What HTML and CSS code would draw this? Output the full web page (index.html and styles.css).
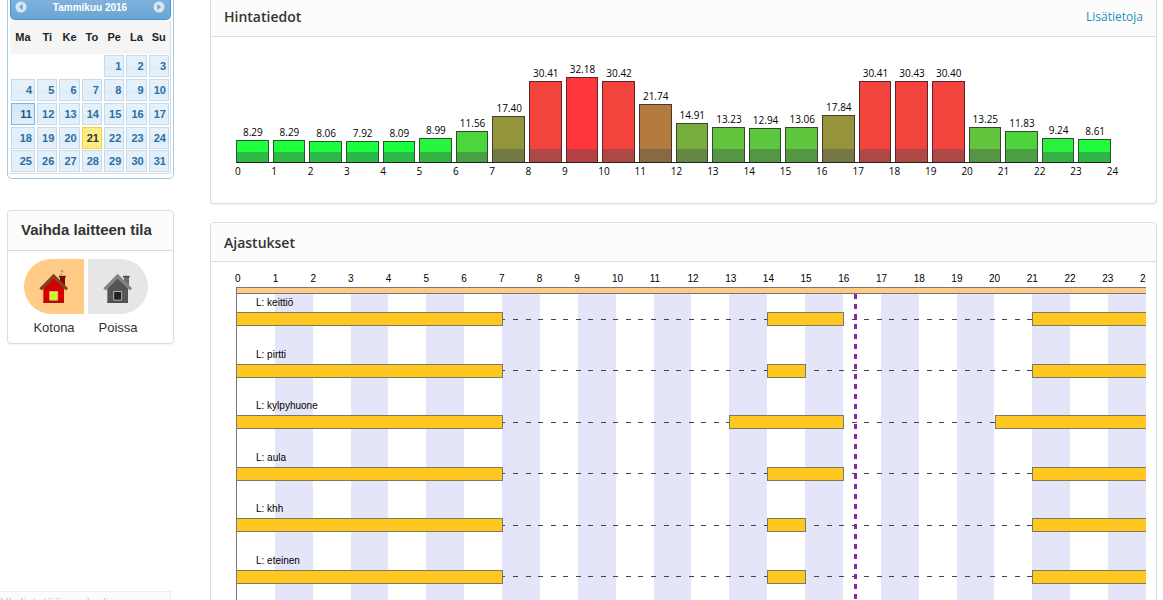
FILE: index.html
```html
<!DOCTYPE html>
<html lang="fi">
<head>
<meta charset="utf-8">
<title>Ohjauspaneeli</title>
<link rel="stylesheet" href="styles.css">
</head>
<body>
<div class="page">
  <aside class="sidebar">
    <section class="datepicker" aria-label="Kalenteri">
      <div class="dp-head">
        <button class="dp-nav" aria-label="Edellinen"><svg viewBox="0 0 12 12"><circle cx="6" cy="6" r="5.5"/><path d="M7.6 3v6L4 6z"/></svg></button>
        <span>Tammikuu 2016</span>
        <button class="dp-nav" aria-label="Seuraava"><svg viewBox="0 0 12 12"><circle cx="6" cy="6" r="5.5"/><path d="M4.4 3v6L8 6z"/></svg></button>
      </div>
      <table class="dp-table">
        <thead><tr><th>Ma</th><th>Ti</th><th>Ke</th><th>To</th><th>Pe</th><th>La</th><th>Su</th></tr></thead>
        <tbody>
          <tr><td></td><td></td><td></td><td></td><td><a href="#">1</a></td><td><a href="#">2</a></td><td><a href="#">3</a></td></tr>
          <tr><td><a href="#">4</a></td><td><a href="#">5</a></td><td><a href="#">6</a></td><td><a href="#">7</a></td><td><a href="#">8</a></td><td><a href="#">9</a></td><td><a href="#">10</a></td></tr>
          <tr><td><a class="selected" href="#">11</a></td><td><a href="#">12</a></td><td><a href="#">13</a></td><td><a href="#">14</a></td><td><a href="#">15</a></td><td><a href="#">16</a></td><td><a href="#">17</a></td></tr>
          <tr><td><a href="#">18</a></td><td><a href="#">19</a></td><td><a href="#">20</a></td><td><a class="today" href="#">21</a></td><td><a href="#">22</a></td><td><a href="#">23</a></td><td><a href="#">24</a></td></tr>
          <tr><td><a href="#">25</a></td><td><a href="#">26</a></td><td><a href="#">27</a></td><td><a href="#">28</a></td><td><a href="#">29</a></td><td><a href="#">30</a></td><td><a href="#">31</a></td></tr>
        </tbody>
      </table>
    </section>

    <section class="card mode-card">
      <h2 class="mode-title">Vaihda laitteen tila</h2>
      <div class="modes">
        <button class="mode home">
          <span class="tile"><svg viewBox="56 40 96 104">
            <path d="M123 58v-5h5v-5h-4v-4h8v6h-4v7z" fill="#a08c70"/>
            <path d="M122 64h15v26h-15z" fill="#8c0000"/><path d="M119 60h20v5h-20z" fill="#4a1408"/>
            <path d="M72 94l30-28 32 28v46H72z" fill="#d40000"/><path d="M72 137h62v4H72z" fill="#8a1008"/>
            <path d="M60 97l43-43 43 43-6 7-37-35-36 35z" fill="#7d4420"/>
            <path d="M91 107h24v26H91z" fill="#ccff22" stroke="#e8a878" stroke-width="3"/>
          </svg></span>
          <span>Kotona</span>
        </button>
        <button class="mode away">
          <span class="tile"><svg viewBox="56 40 96 104">
            <path d="M122 64h15v26h-15z" fill="#6c6c6c"/><path d="M119 60h20v5h-20z" fill="#484848"/>
            <path d="M72 94l30-28 32 28v46H72z" fill="#555"/><path d="M72 137h62v4H72z" fill="#444"/>
            <path d="M60 97l43-43 43 43-6 7-37-35-36 35z" fill="#848484"/>
            <path d="M91 107h24v26H91z" fill="#222" stroke="#b0b0b0" stroke-width="3"/>
          </svg></span>
          <span>Poissa</span>
        </button>
      </div>
    </section>
  </aside>

  <main class="content">
    <section class="card price-card">
      <header class="card-head"><h2>Hintatiedot</h2><a href="#">Lisätietoja</a></header>
      <div class="prices">
        <div class="bars">
          <div class="bar low" style="--v:8.29;--c:#20ff3e"><span>8.29</span><i></i></div>
          <div class="bar low" style="--v:8.29;--c:#20ff3e"><span>8.29</span><i></i></div>
          <div class="bar low" style="--v:8.06;--c:#1cff3e"><span>8.06</span><i></i></div>
          <div class="bar low" style="--v:7.92;--c:#1aff3e"><span>7.92</span><i></i></div>
          <div class="bar low" style="--v:8.09;--c:#1cff3e"><span>8.09</span><i></i></div>
          <div class="bar low" style="--v:8.99;--c:#28f53e"><span>8.99</span><i></i></div>
          <div class="bar low" style="--v:11.56;--c:#4ad63c"><span>11.56</span><i></i></div>
          <div class="bar" style="--v:17.40;--c:#93953c"><span>17.40</span><i></i></div>
          <div class="bar" style="--v:30.41;--c:#f2433c"><span>30.41</span><i></i></div>
          <div class="bar" style="--v:32.18;--c:#ff373c"><span>32.18</span><i></i></div>
          <div class="bar" style="--v:30.42;--c:#f2433c"><span>30.42</span><i></i></div>
          <div class="bar" style="--v:21.74;--c:#b27a3c"><span>21.74</span><i></i></div>
          <div class="bar" style="--v:14.91;--c:#76ad3c"><span>14.91</span><i></i></div>
          <div class="bar" style="--v:13.23;--c:#60c43c"><span>13.23</span><i></i></div>
          <div class="bar" style="--v:12.94;--c:#5cc63c"><span>12.94</span><i></i></div>
          <div class="bar" style="--v:13.06;--c:#5ec53c"><span>13.06</span><i></i></div>
          <div class="bar" style="--v:17.84;--c:#97923c"><span>17.84</span><i></i></div>
          <div class="bar" style="--v:30.41;--c:#f2433c"><span>30.41</span><i></i></div>
          <div class="bar" style="--v:30.43;--c:#f2433c"><span>30.43</span><i></i></div>
          <div class="bar" style="--v:30.40;--c:#f2433c"><span>30.40</span><i></i></div>
          <div class="bar" style="--v:13.25;--c:#60c43c"><span>13.25</span><i></i></div>
          <div class="bar" style="--v:11.83;--c:#4dd43c"><span>11.83</span><i></i></div>
          <div class="bar low" style="--v:9.24;--c:#2af23e"><span>9.24</span><i></i></div>
          <div class="bar low" style="--v:8.61;--c:#22fa3e"><span>8.61</span><i></i></div>
        </div>
        <div class="hours price-hours">
          <span>0</span><span>1</span><span>2</span><span>3</span><span>4</span><span>5</span><span>6</span><span>7</span><span>8</span><span>9</span><span>10</span><span>11</span><span>12</span><span>13</span><span>14</span><span>15</span><span>16</span><span>17</span><span>18</span><span>19</span><span>20</span><span>21</span><span>22</span><span>23</span><span>24</span>
        </div>
      </div>
    </section>

    <section class="card">
      <header class="card-head"><h2>Ajastukset</h2></header>
      <div class="schedule">
        <div class="hours schedule-hours">
          <span>0</span><span>1</span><span>2</span><span>3</span><span>4</span><span>5</span><span>6</span><span>7</span><span>8</span><span>9</span><span>10</span><span>11</span><span>12</span><span>13</span><span>14</span><span>15</span><span>16</span><span>17</span><span>18</span><span>19</span><span>20</span><span>21</span><span>22</span><span>23</span><span>24</span>
        </div>
        <div class="mode-strip"></div>
        <div class="lanes">
          <div class="lane"><p>L: keittiö</p><div class="track"><b style="grid-column:1/8"></b><b style="grid-column:15/17"></b><b class="open" style="grid-column:22/25"></b></div></div>
          <div class="lane"><p>L: pirtti</p><div class="track"><b style="grid-column:1/8"></b><b style="grid-column:15/16"></b><b class="open" style="grid-column:22/25"></b></div></div>
          <div class="lane"><p>L: kylpyhuone</p><div class="track"><b style="grid-column:1/8"></b><b style="grid-column:14/17"></b><b class="open" style="grid-column:21/25"></b></div></div>
          <div class="lane"><p>L: aula</p><div class="track"><b style="grid-column:1/8"></b><b style="grid-column:15/17"></b><b class="open" style="grid-column:22/25"></b></div></div>
          <div class="lane"><p>L: khh</p><div class="track"><b style="grid-column:1/8"></b><b style="grid-column:15/16"></b><b class="open" style="grid-column:22/25"></b></div></div>
          <div class="lane"><p>L: eteinen</p><div class="track"><b style="grid-column:1/8"></b><b style="grid-column:15/16"></b><b class="open" style="grid-column:22/25"></b></div></div>
          <div class="now"></div>
        </div>
      </div>
    </section>
  </main>
</div>
<div class="status">Yhdistetään palvelimeen…</div>
</body>
</html>
```
FILE: styles.css
```css
* { box-sizing: border-box; }

html { overflow: hidden; }

body {
  margin: 0;
  color: #333;
  background: #fff;
  font-family: "Liberation Sans", Arial, sans-serif;
  font-size: 13px;
  overflow: hidden;
}

h2, p { margin: 0; }
button { font: inherit; color: inherit; border: 0; padding: 0; background: none; }

.page {
  display: flex;
  gap: 36px;
  align-items: flex-start;
  padding: 0 6px 0 7px;
}

.sidebar { flex: none; width: 167px; }
.content { flex: 1; min-width: 0; }

.card {
  border: 1px solid #ddd;
  border-radius: 4px;
  background: #fff;
  box-shadow: 0 1px 2px rgba(0, 0, 0, .06);
}

/* Date picker */
.datepicker {
  padding: 0 2px 4px;
  border: 1px solid #a6c9e2;
  border-top: 0;
  border-radius: 0 0 5px 5px;
  margin-bottom: 31px;
}

.dp-head {
  display: flex;
  align-items: center;
  justify-content: space-between;
  height: 20px;
  padding: 0 5px 5px 4px;
  border: 1px solid #4297d7;
  border-top: 0;
  border-radius: 0 0 5px 5px;
  background: linear-gradient(#7fb2dc, #6ba5d3);
  color: #fff;
  font-size: 10px;
  font-weight: bold;
}

.dp-nav { display: flex; width: 12px; height: 12px; }
.dp-nav svg { width: 12px; height: 12px; }
.dp-nav circle { fill: #d8e7f3; }
.dp-nav path { fill: #6ba5d3; }

.dp-table {
  width: 100%;
  table-layout: fixed;
  border-collapse: separate;
  border-spacing: 0;
  border-right: 1px solid #ddd;
  border-bottom: 1px solid #ddd;
  font-size: 11px;
  font-weight: bold;
}

.dp-table th { height: 34px; padding: 0; background: #f5f5f5; color: #222; text-align: center; }
.dp-table th:first-child { width: 26px; }
.dp-table td { height: 24px; padding: 1px; }

.dp-table a {
  display: block;
  height: 22px;
  padding-right: 2px;
  border: 1px solid #c5dbec;
  background: linear-gradient(#e4f1fb 50%, #dcecf9 50%, #e6f2fc);
  color: #2e6e9e;
  line-height: 20px;
  text-align: right;
  text-decoration: none;
}

.dp-table tr:last-child td { height: 23px; padding-top: 0; }

.dp-table .selected { border-color: #79b7e7; background: linear-gradient(#d3e4f3, #e2eef8); color: #1d5987; }
.dp-table .today { border-color: #fad42e; background: #fbec88; color: #363636; }

/* Mode switch */
.mode-title {
  height: 40px;
  padding-left: 13px;
  border-bottom: 1px solid #ddd;
  border-radius: 4px 4px 0 0;
  background: #fcfcfc;
  font-size: 15px;
  line-height: 38px;
  white-space: nowrap;
}

.modes { display: flex; gap: 4px; padding: 8px 16px 6px; }
.mode { display: flex; flex-direction: column; align-items: center; gap: 5px; line-height: 18px; }

.tile { display: flex; align-items: center; justify-content: center; width: 60px; height: 55px; }
.tile svg { width: 32px; height: 35px; }
.home .tile { border-radius: 28px 0 0 28px; background: #ffcb87; }
.away .tile { border-radius: 0 28px 28px 0; background: #e6e6e6; }

/* Card headers */
.card-head {
  display: flex;
  justify-content: space-between;
  align-items: center;
  height: 39px;
  padding: 0 13px;
  border-bottom: 1px solid #ddd;
  border-radius: 4px 4px 0 0;
  background: #fcfcfc;
  font-family: "Open Sans", sans-serif;
}

.card-head h2 { font-size: 14px; font-weight: 600; }
.card-head a { color: #1c8fc0; font-size: 12px; text-decoration: none; }

.hours {
  display: grid;
  grid-auto-flow: column;
  color: #000;
  font-size: 10px;
  line-height: 14px;
}

/* Price chart */
.price-card { border-top: 0; border-radius: 0 0 4px 4px; margin-bottom: 18px; }
.price-card .card-head { height: 37px; padding-bottom: 3px; border-radius: 0; }

.prices {
  padding: 24px 13px 24px 24px;
  color: #000;
  font-family: "Open Sans", sans-serif;
  font-size: 10px;
}

.bars {
  display: grid;
  grid-template-columns: repeat(24, 1fr);
  align-items: end;
  height: 102px;
  margin-right: 28px;
  padding-left: 1px;
}

.bar { padding-right: 4px; border-bottom: 1px solid #222; text-align: center; }
.bar:last-child { margin-right: 4px; padding-right: 0; }
.bar span { display: block; line-height: 15px; padding-left: 1px; }

.bar i {
  display: flex;
  align-items: flex-end;
  height: calc(var(--v) * 2.65px);
  border: 1px solid rgba(40, 30, 40, .75);
  border-bottom: 0;
  background: var(--c);
}

.bar i::after { content: ""; flex: 1; height: 13px; background: rgba(70, 80, 80, .4); }
.bar.low i::after { height: 10px; }

.price-hours { grid-template-columns: repeat(25, 1fr); padding-top: 1px; line-height: 15px; }

/* Schedule */
.schedule { padding: 10px 10px 0 24px; }
.schedule-hours { grid-auto-columns: 4.14%; overflow: hidden; height: 15px; }

.mode-strip {
  height: 7px;
  margin-left: 1px;
  border: 1px solid #777;
  border-right: 0;
  background: #ffc987;
}

.lanes {
  position: relative;
  display: grid;
  grid-template-rows: repeat(6, 1fr);
  min-height: 309px;
  margin-left: 1px;
  border-left: 1px solid #777;
  background: repeating-linear-gradient(to right, transparent 0 calc(100% / 24), #e5e5f9 calc(100% / 24) calc(100% / 12));
}

.lane p { padding: 2px 0 3px 19px; color: #000; font-size: 10px; line-height: 13px; }

.track {
  display: grid;
  grid-template-columns: repeat(24, 1fr);
  height: 14px;
  background: repeating-linear-gradient(to right, #444 0 5px, transparent 5px 1.38%) center / 100% 1px no-repeat;
}

.track b { border: 1px solid #7c7866; margin-right: -1px; background: #ffc820; }
.track b:first-child { border-left: 0; }
.track .open { border-right: 0; margin-right: 0; }

.now {
  position: absolute;
  top: 0;
  bottom: 0;
  left: 67.9%;
  width: 3px;
  background: repeating-linear-gradient(#8a24a8 0 5px, transparent 5px 10px);
}

/* Loading notice at the window's lower edge */
.status {
  position: fixed;
  left: 0;
  top: 591px;
  width: 171px;
  border: 1px solid #eee;
  border-left: 0;
  background: #fcfcfc;
  color: #c8c8c8;
  line-height: 22px;
}
```
